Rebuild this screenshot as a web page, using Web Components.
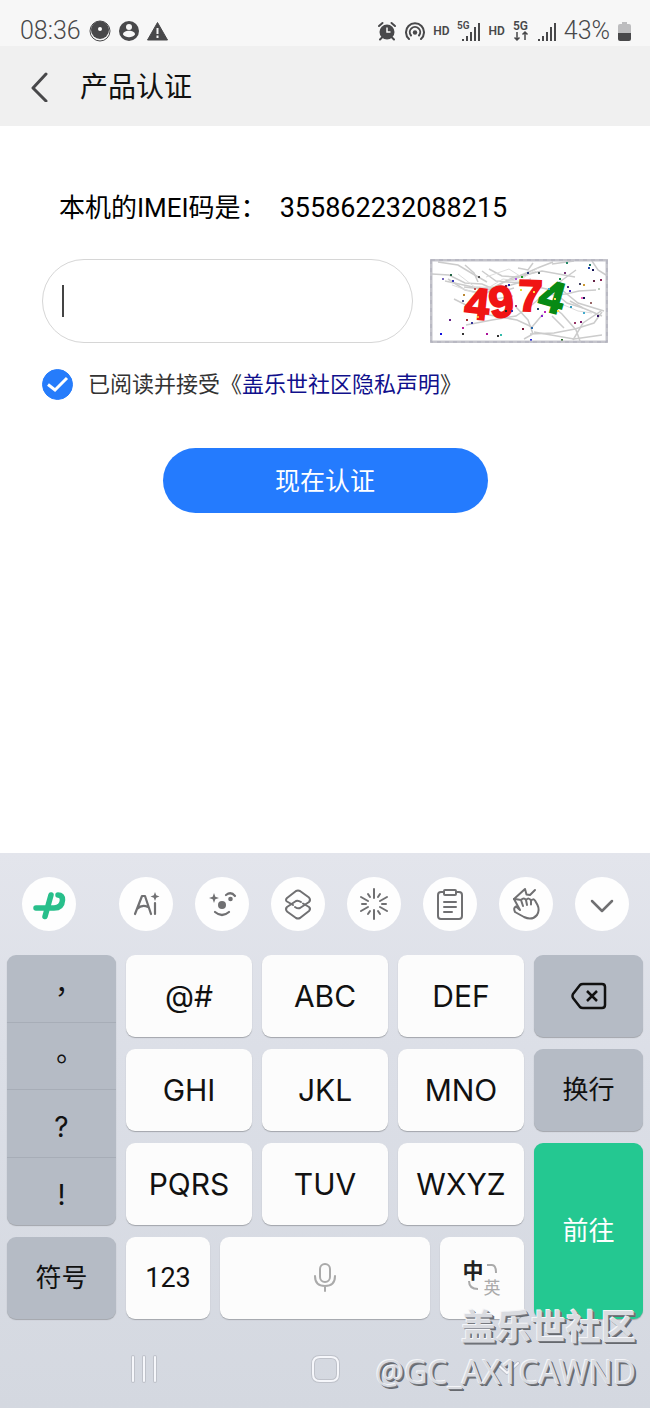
<!DOCTYPE html>
<html lang="zh-CN">
<head>
<meta charset="utf-8">
<meta name="viewport" content="width=device-width, initial-scale=1">
<title>产品认证</title>
<style>
  body {
    margin: 0;
    background: #fff;
    color: #111;
    font-family: Roboto, "Noto Sans CJK SC", sans-serif;
  }
</style>
</head>
<body>
<auth-app></auth-app>

<script>
class BaseElement extends HTMLElement {
  constructor() {
    super();
    this.attachShadow({ mode: 'open' });
  }

  connectedCallback() {
    this.render();
  }
}

class StatusBar extends BaseElement {
  render() {
    this.shadowRoot.innerHTML = `
      <style>
        :host {
          display: flex;
          justify-content: space-between;
          align-items: center;
          height: 30px;
          padding: 16px 19px 0 20px;
          background: #f7f7f7;
          color: #48484a;
          font-size: 25px;
          font-weight: 300;
          line-height: 30px;
        }
        div { display: flex; align-items: center; gap: 8px; }
        svg { display: block; fill: currentColor; }
        small { font-size: 12px; font-weight: 600; line-height: 30px; }
        svg text { font: 600 12px Roboto, sans-serif; }
        svg .tiny { font-size: 10px; }
      </style>
      <div>
        <span>08:36</span>
        <svg width="22" height="22" viewBox="0 0 22 22">
          <circle cx="11" cy="11" r="10" fill="none" stroke="currentColor" stroke-width="1"/>
          <circle cx="11" cy="10" r="9"/><circle cx="11" cy="9" r="2" fill="#fff"/>
        </svg>
        <svg width="20" height="20" viewBox="0 0 20 20">
          <circle cx="10" cy="10" r="10"/>
          <circle cx="10" cy="6" r="3" fill="#f7f7f7"/>
          <path d="M4 13.500C4 8.500 16 8.500 16 13.500C13.500 17 6.500 17 4 13.500Z" fill="#f7f7f7"/>
        </svg>
        <svg width="21" height="20" viewBox="0 0 21 20">
          <path d="M10.500 1.500L20.500 19H.5Z" stroke="currentColor" stroke-linejoin="round"/>
          <path d="M10.500 7v6M10.500 14.500v2.500" stroke="#f7f7f7" stroke-width="2"/>
        </svg>
      </div>
      <div>
        <svg width="20" height="20" viewBox="0 0 20 20">
          <circle cx="10" cy="11" r="7.500"/>
          <path d="M2 5L5.500 2M18 5L14.500 2M5 16.500L3 18.500M15 16.500L17 18.500" stroke="currentColor" stroke-width="2" stroke-linecap="round"/>
          <path d="M10 6.500V11h3.500" fill="none" stroke="#f7f7f7" stroke-width="1.500"/>
        </svg>
        <svg width="20" height="20" viewBox="0 0 20 20">
          <g fill="none" stroke="currentColor" stroke-width="2" stroke-linecap="round">
            <path d="M4 18A9 9 0 1 1 16 18"/><path d="M6 14.500A5.200 5.200 0 1 1 14 14.500"/>
          </g>
          <circle cx="10" cy="11.500" r="2.200"/>
        </svg>
        <small>HD</small>
        <svg width="23" height="22" viewBox="0 0 23 22">
          <text class="tiny" x="0" y="9">5G</text>
          <path d="M5 19h2v2H5zM9 16h2v5H9zM13 12h2v9h-2zM17 7h2v14h-2zM21 3h2v18h-2z"/>
        </svg>
        <small>HD</small>
        <svg width="16" height="22" viewBox="0 0 16 22">
          <text x="0" y="10">5G</text>
          <path d="M4 12v8M1.500 17.500L4 20l2.500-2.500M12 20v-8M9.500 14.500L12 12l2.500 2.500" fill="none" stroke="currentColor" stroke-width="1.500"/>
        </svg>
        <svg width="19" height="22" viewBox="0 0 19 22">
          <path d="M1 19h2v2H1zM5 16h2v5H5zM9 12h2v9H9zM13 7h2v14h-2zM17 3h2v18h-2z"/>
        </svg>
        <span>43%</span>
        <svg width="13" height="20" viewBox="0 0 13 20">
          <path d="M4 1h5v2h2q2 0 2 2v7H0V5q0-2 2-2h2z" fill="#bdbdbf"/>
          <path d="M0 12h13v6q0 2-2 2H2q-2 0-2-2z"/>
        </svg>
      </div>
    `;
  }
}

class PageHeader extends BaseElement {
  render() {
    this.shadowRoot.innerHTML = `
      <style>
        :host {
          display: flex;
          align-items: center;
          height: 80px;
          padding-left: 28px;
          background: #f0f0f0;
        }
        button {
          width: 52px;
          padding: 0;
          border: 0;
          background: none;
          color: #48484a;
          text-align: left;
        }
        svg { display: block; }
        h1 { margin: 0; padding-top: 4px; font-size: 28px; font-weight: 400; line-height: 40px; }
      </style>
      <button type="button" aria-label="返回">
        <svg width="24" height="32" viewBox="0 0 24 32" fill="none" stroke="currentColor" stroke-width="3" stroke-linecap="round">
          <path d="M18 4L5 18L18 31" stroke-linejoin="round"/>
        </svg>
      </button>
      <h1><slot></slot></h1>
    `;
  }
}

class CaptchaImage extends BaseElement {
  // [x, y, colour]
  static dots = [
    [136, 3, '#286'], [159, 5, '#276'], [158, 8, '#24a'], [20, 15, '#264'], [162, 10, '#115'],
    [97, 13, '#237'], [134, 13, '#737'], [85, 19, '#a5d'], [22, 21, '#33b'], [48, 17, '#555'],
    [163, 21, '#624'], [170, 20, '#825'], [153, 25, '#c93'], [149, 24, '#446'], [137, 27, '#538'],
    [129, 19, '#184'], [75, 26, '#824'], [33, 35, '#b83'], [32, 41, '#558'], [139, 31, '#42c'],
    [153, 38, '#115'], [160, 43, '#966'], [140, 47, '#39b'], [153, 53, '#4ac'], [114, 52, '#b2b'],
    [111, 56, '#82c'], [107, 49, '#246'], [167, 56, '#316'], [150, 62, '#716'], [176, 70, '#654'],
    [19, 60, '#628'], [32, 68, '#b29'], [41, 63, '#339'], [32, 74, '#333'], [10, 74, '#11d'],
    [56, 74, '#a19'], [67, 76, '#333'], [70, 75, '#3ba'], [92, 69, '#713'], [100, 80, '#22d'],
    [131, 80, '#262'], [101, 68, '#26a'], [36, 60, '#933'], [144, 63, '#936'], [12, 19, '#76b'],
    [91, 17, '#292'], [108, 13, '#455'], [78, 25, '#22a'], [44, 29, '#b55'], [168, 29, '#bcb'],
    [118, 29, '#3ac'], [103, 32, '#fd4'], [124, 39, '#fd5'], [75, 51, '#222'], [85, 46, '#a37'],
    [151, 38, '#e6b'], [90, 30, '#dd3'], [127, 51, '#fd4'], [47, 57, '#fa3'], [81, 51, '#33a']
  ];

  render() {
    const dots = CaptchaImage.dots
      .map(([x, y, fill]) => `<rect x="${x}" y="${y}" width="2" height="2" fill="${fill}"/>`)
      .join('');
    this.shadowRoot.innerHTML = `
      <style>
        :host { display: block; }
        button { display: block; padding: 0; border: 0; background: none; }
        svg { display: block; }
        text { font: 700 44px "Liberation Sans", sans-serif; stroke-width: 2px; }
      </style>
      <button type="button" aria-label="刷新验证码">
        <svg width="178" height="84" viewBox="0 0 178 84">
          <rect width="178" height="84" fill="#fff"/>
          <g fill="none" stroke="#ccc" stroke-width="1.500">
            <path d="M2 15L19 16L35 24L52 25L70 33L84 29"/>
            <path d="M8 3L28 6L43 15L57 23"/>
            <path d="M35 6L44 14L48 23M59 10L72 17L87 18L110 8L123 3"/>
            <path d="M15 22L43 28L62 29L84 18L112 12L145 18"/>
            <path d="M18 20L35 31L55 35L74 23L106 13"/>
            <path d="M24 40L54 55L87 61L102 68L113 55"/>
            <path d="M36 66L62 61L86 57L103 45L120 30L146 11"/>
            <path d="M86 48L98 61L103 75L94 80M100 75L124 74L145 70L164 64L172 53"/>
            <path d="M116 42L132 55L146 71L150 82M143 81L153 64L171 52"/>
            <path d="M132 31L148 44L174 52M140 42L153 49L172 57"/>
            <path d="M113 36L136 35L149 32L166 31"/>
            <path d="M88 9L98 11L103 4M122 5L144 2M162 2L168 11L176 16"/>
            <path d="M52 12L66 22L90 24L121 31L137 44L153 49"/>
            <path d="M122 57L134 69M34 28L62 31L81 26L101 20"/>
            <path d="M65 40L83 37M104 73L144 80L172 76"/>
          </g>
          <g fill="none" stroke="#ddd">
            <path d="M22 26L48 35L73 20L100 24M28 15L46 29L75 27"/>
            <path d="M56 18L79 10L93 19L108 9M129 44L148 52L162 54"/>
          </g>
          <g fill="#f01414" stroke="#f01414">
            <text x="35" y="60" transform="rotate(6 48 45)">4</text>
            <text x="59" y="58" transform="rotate(-8 71 43)">9</text>
            <text x="88" y="52" transform="rotate(2 100 36)">7</text>
          </g>
          <text x="110" y="53" transform="rotate(16 122 38)" fill="#078a14" stroke="#078a14">4</text>
          ${dots}
          <rect x="1" y="1" width="176" height="82" fill="none" stroke="#c4c4cb" stroke-width="3"/>
          <rect x="1" y="1" width="176" height="82" fill="none" stroke="#adadba" stroke-dasharray="4 4"/>
        </svg>
      </button>
    `;
  }
}

class AgreeCheck extends BaseElement {
  render() {
    this.shadowRoot.innerHTML = `
      <style>
        :host {
          display: flex;
          align-items: center;
          gap: 15px;
          color: #333;
          font-size: 22px;
          line-height: 32px;
        }
        .box { display: grid; width: 31px; height: 31px; }
        .box > * { grid-area: 1 / 1; }
        input {
          appearance: none;
          width: 31px;
          height: 31px;
          margin: 0;
          border: 1px solid #267cfb;
          border-radius: 50%;
        }
        input:checked { background: #267cfb; }
        svg { pointer-events: none; }
        .text { padding-top: 2px; }
        a { color: #10108c; text-decoration: none; }
      </style>
      <span class="box">
        <input type="checkbox" id="agree" checked>
        <svg width="31" height="31" viewBox="0 0 31 31" fill="none" stroke="#fff" stroke-width="3">
          <path d="M6 15.500L13 21L25 9"/>
        </svg>
      </span>
      <span class="text"><label for="agree">已阅读并接受</label>《<a href="#privacy">盖乐世社区隐私声明</a>》</span>
    `;
  }
}

class AuthForm extends BaseElement {
  render() {
    this.shadowRoot.innerHTML = `
      <style>
        :host { display: block; padding: 63px 42px; }
        form { display: flex; flex-direction: column; }
        p {
          display: flex;
          align-items: baseline;
          gap: 13px;
          margin: 0 0 32px 17px;
          color: #000;
          font-size: 26px;
          line-height: 38px;
        }
        output { font-size: 27px; }
        .row { display: flex; gap: 17px; margin-bottom: 24px; }
        .field {
          display: flex;
          flex: 1;
          align-items: center;
          box-sizing: border-box;
          min-width: 0;
          height: 84px;
          padding: 0 19px;
          border: 1px solid #d6d6d6;
          border-radius: 42px;
        }
        .caret { width: 2px; height: 32px; background: #444; }
        input {
          flex: 1;
          min-width: 0;
          height: 60px;
          border: 0;
          outline: 0;
          background: none;
          caret-color: transparent;
          font: inherit;
          font-size: 26px;
        }
        .submit {
          align-self: center;
          width: 325px;
          max-width: 100%;
          height: 65px;
          margin-top: 47px;
          padding: 0 0 4px;
          border: 0;
          border-radius: 33px;
          background: #247bfe;
          color: #fff;
          font: inherit;
          font-size: 25px;
        }
      </style>
      <form>
        <p><span>本机的IMEI码是：</span><output>355862232088215</output></p>
        <div class="row">
          <div class="field">
            <span class="caret"></span>
            <input type="text" aria-label="验证码">
          </div>
          <captcha-image></captcha-image>
        </div>
        <agree-check></agree-check>
        <button class="submit" type="button">现在认证</button>
      </form>
    `;
  }
}

class ToolButton extends BaseElement {
  static icons = {
    logo: `<g fill="none" stroke="#28bf8b" stroke-width="5.500" stroke-linecap="round" stroke-linejoin="round">
        <path d="M29 18L23 39.500M14 31H32Q40 31 40.500 23Q40.500 18 36 18"/></g>`,
    ai: `<path d="M16 37L23 19H26L32 37M18 32Q23 27 29 30M36 26V37" stroke-width="2.200"/>
        <path d="M36 15L37.200 18.300L40.500 19.500L37.200 20.700L36 24L34.800 20.700L31.500 19.500L34.800 18.300Z" fill="currentColor" stroke="none"/>`,
    face: `<path d="M19 16L20.300 19.700L24 21L20.300 22.300L19 26L17.700 22.300L14 21L17.700 19.700Z" fill="currentColor" stroke="none"/>
        <circle cx="27" cy="28" r="4" fill="currentColor" stroke="none"/>
        <circle cx="35.500" cy="22" r="2.300" fill="currentColor" stroke="none"/>
        <path d="M31 18Q36 14 40 19M20 35Q27 41 34 35" stroke-width="2.200"/>`,
    layers: `<path d="M22 28L16 24.500Q14 23 16 21L25 14Q27 13 29 14L38 20.500Q40 23 38 25L29 31Q27 32 24 30"/>
        <path d="M32 26.500L38 30Q40 32 38 34L29 41Q27 42 25 41L16 34.500Q14 32 16 30L25 24Q27 23 30 25"/>`,
    burst: `<path d="M27 12V21M27 33V42M15 27H19M35 27H39M14 20L21 24M40 20L33 24M14 34L21 30M40 34L33 30M21 17L23 20M33 17L31 20M21 37L23 34M33 37L31 34"/>`,
    clip: `<rect x="15" y="15" width="24" height="27" rx="3"/>
        <rect x="21" y="13" width="12" height="5" rx="1" fill="#fff"/>
        <path d="M21 25H33M21 30H33M21 35H29"/>`,
    hand: `<path d="M15 22L26 12L27.500 17.500L31 18L36 13"/>
        <path d="M15 22L21 33L17 29.500Q14 31 16 35L25 40Q33 44 38 38Q41 33 38.500 28L36 23.500Q34 21 32 24V27.500M32 23.500Q30 20 27 23L28 28M27 23Q25 20 22 23L24 29M22 23L16 22"/>`,
    down: `<path d="M17 24L27 34L37 24" stroke-width="2.500"/>`
  };

  render() {
    this.shadowRoot.innerHTML = `
      <style>
        :host { display: block; }
        button {
          display: block;
          width: 54px;
          height: 54px;
          padding: 0;
          border: 0;
          border-radius: 50%;
          background: #fefefe;
          color: #707072;
        }
        svg { display: block; }
      </style>
      <button type="button" aria-label="${this.getAttribute('label')}">
        <svg width="54" height="54" viewBox="0 0 54 54" fill="none" stroke="currentColor" stroke-width="2" stroke-linecap="round" stroke-linejoin="round">
          ${ToolButton.icons[this.getAttribute('icon')]}
        </svg>
      </button>
    `;
  }
}

class KeyCap extends BaseElement {
  render() {
    this.shadowRoot.innerHTML = `
      <style>
        :host { display: grid; }
        button {
          min-width: 0;
          padding: 0;
          border: 0;
          border-radius: 9px;
          background: #fcfcfc;
          box-shadow: 0 1px 1px #a2a5ab;
          color: #111;
          font-family: Inter, "Noto Sans CJK SC", sans-serif;
          font-size: 30px;
          line-height: 40px;
        }
        :host([tone="gray"]) button { background: #b5bbc5; font-size: 26px; }
        :host([tone="number"]) button { font-family: Roboto, sans-serif; font-size: 27px; }
        :host([tone="go"]) button { background: #24c891; color: #fff; font-size: 26px; }
        ::slotted(svg) { display: block; margin: 0 auto; }
      </style>
      <button type="button"><slot></slot></button>
    `;
  }
}

class PunctuationColumn extends BaseElement {
  render() {
    this.shadowRoot.innerHTML = `
      <style>
        :host {
          display: grid;
          grid-template-rows: repeat(4, 1fr);
          overflow: hidden;
          border-radius: 9px;
          background: #b5bbc5;
          box-shadow: 0 1px 1px #a2a5ab;
        }
        button {
          padding: 8px 0 0;
          border: 0;
          border-bottom: 1px solid #a7adb7;
          background: none;
          color: #111;
          font-family: Inter, "Noto Sans CJK TC", sans-serif;
          font-size: 28px;
          line-height: 40px;
        }
        button:last-child { border-bottom: 0; }
      </style>
      ${['，', '。', '?', '!'].map(mark => `<button type="button" lang="zh-TW">${mark}</button>`).join('')}
    `;
  }
}

class LanguageMark extends BaseElement {
  render() {
    this.shadowRoot.innerHTML = `
      <style>
        :host {
          display: grid;
          grid-template-columns: 20px 18px;
          grid-template-rows: 18px 18px;
          place-content: center;
          place-items: center;
          color: #aaa;
          font-family: "Noto Sans CJK SC", sans-serif;
          font-size: 17px;
          line-height: 18px;
        }
        b { color: #222; font-size: 21px; font-weight: 700; }
        svg { display: block; fill: none; stroke: currentColor; stroke-width: 2; }
      </style>
      <b>中</b>
      <svg width="14" height="14" viewBox="0 0 14 14"><path d="M2 3H7Q11 3 11 11"/></svg>
      <svg width="14" height="14" viewBox="0 0 14 14"><path d="M3 1Q3 9 12 9"/></svg>
      <span>英</span>
    `;
  }
}

class NavBar extends BaseElement {
  render() {
    this.shadowRoot.innerHTML = `
      <style>
        :host {
          display: grid;
          grid-template-columns: repeat(3, 1fr);
          padding: 34px 52px 23px;
        }
        button { justify-self: center; padding: 0; border: 0; background: none; }
        svg {
          display: block;
          fill: none;
          stroke-linecap: round;
          stroke-linejoin: round;
        }
        .edge { stroke: #bfc2ca; stroke-width: 4; }
        .line { stroke: #f6f7fb; stroke-width: 2; }
      </style>
      ${[
        ['最近任务', 'M7 4V28M18 4V28M29 4V28'],
        ['主屏幕', 'M12 4H23Q30 4 30 11V21Q30 28 23 28H12Q5 28 5 21V11Q5 4 12 4Z'],
        ['收起键盘', 'M6 10L17 20L28 10']
      ].map(([label, d]) => `
        <button type="button" aria-label="${label}">
          <svg width="34" height="32" viewBox="0 0 34 32"><path class="edge" d="${d}"/><path class="line" d="${d}"/></svg>
        </button>
      `).join('')}
    `;
  }
}

class WaterMark extends BaseElement {
  render() {
    this.shadowRoot.innerHTML = `
      <style>
        :host {
          display: block;
          color: #d9dbe0;
          font-family: "Open Sans", "Noto Sans CJK SC", sans-serif;
          font-size: 32px;
          line-height: 45px;
          text-align: right;
          text-shadow: -1px -1px 0 #f4f5f8, 1px 1px 0 #777a80, 2px 2px 0 #66696e;
          pointer-events: none;
        }
        b, span { display: block; }
        b { font-size: 35px; }
      </style>
      <b>盖乐世社区</b>
      <span>@GC_AX1CAWND</span>
    `;
  }
}

class KeyBoard extends BaseElement {
  render() {
    this.shadowRoot.innerHTML = `
      <style>
        :host {
          display: block;
          position: relative;
          background: linear-gradient(#e3e5ec, #dcdfe7 35%, #d4d8e0);
        }
        .tools { display: flex; gap: 22px; padding: 24px 21px 24px 22px; }
        .tools tool-button:first-child { margin-right: auto; }
        .keys {
          display: grid;
          grid-template-columns: 109fr 126fr 126fr 126fr 109fr;
          grid-template-rows: repeat(4, 82px);
          gap: 12px 10px;
          padding: 0 7px;
        }
        punctuation-column { grid-area: 1 / 1 / 4 / 2; }
        .go { grid-area: 3 / 5 / 5 / 6; }
        .bottom {
          display: grid;
          grid-area: 4 / 2 / 5 / 5;
          grid-template-columns: 2fr 5fr 2fr;
          gap: 10px;
        }
        water-mark { position: absolute; right: 14px; bottom: 14px; }
      </style>
      <div class="tools">
        <tool-button icon="logo" label="输入法"></tool-button>
        <tool-button icon="ai" label="智能助手"></tool-button>
        <tool-button icon="face" label="表情"></tool-button>
        <tool-button icon="layers" label="快捷短语"></tool-button>
        <tool-button icon="burst" label="特效"></tool-button>
        <tool-button icon="clip" label="剪贴板"></tool-button>
        <tool-button icon="hand" label="手写"></tool-button>
        <tool-button icon="down" label="收起"></tool-button>
      </div>
      <div class="keys">
        <punctuation-column></punctuation-column>
        <key-cap>@#</key-cap>
        <key-cap>ABC</key-cap>
        <key-cap>DEF</key-cap>
        <key-cap tone="gray">
          <svg width="36" height="28" viewBox="0 0 36 28" fill="none" stroke="#111" stroke-width="2.500" stroke-linejoin="round">
            <path d="M12 2H31Q34 2 34 5V23Q34 26 31 26H12Q10 26 9 25L2 16Q1 14 2 12L9 3Q10 2 12 2ZM16 9L26 19M26 9L16 19"/>
          </svg>
        </key-cap>
        <key-cap>GHI</key-cap>
        <key-cap>JKL</key-cap>
        <key-cap>MNO</key-cap>
        <key-cap tone="gray">换行</key-cap>
        <key-cap>PQRS</key-cap>
        <key-cap>TUV</key-cap>
        <key-cap>WXYZ</key-cap>
        <key-cap class="go" tone="go">前往</key-cap>
        <key-cap tone="gray">符号</key-cap>
        <div class="bottom">
          <key-cap tone="number">123</key-cap>
          <key-cap>
            <svg width="24" height="30" viewBox="0 0 24 30" fill="none" stroke="#aaa" stroke-width="2" stroke-linecap="round">
              <rect x="7" y="1" width="10" height="18" rx="5"/>
              <path d="M2 13Q2 23 12 23Q22 23 22 13M12 23V28"/>
            </svg>
          </key-cap>
          <key-cap><language-mark></language-mark></key-cap>
        </div>
      </div>
      <nav-bar></nav-bar>
      <water-mark></water-mark>
    `;
  }
}

class AuthApp extends BaseElement {
  render() {
    this.shadowRoot.innerHTML = `
      <style>
        :host { display: flex; flex-direction: column; min-height: 100vh; }
        auth-form { flex: 1; }
      </style>
      <status-bar></status-bar>
      <page-header>产品认证</page-header>
      <auth-form></auth-form>
      <key-board></key-board>
    `;
  }
}

customElements.define('status-bar', StatusBar);
customElements.define('page-header', PageHeader);
customElements.define('captcha-image', CaptchaImage);
customElements.define('agree-check', AgreeCheck);
customElements.define('auth-form', AuthForm);
customElements.define('tool-button', ToolButton);
customElements.define('key-cap', KeyCap);
customElements.define('punctuation-column', PunctuationColumn);
customElements.define('language-mark', LanguageMark);
customElements.define('nav-bar', NavBar);
customElements.define('water-mark', WaterMark);
customElements.define('key-board', KeyBoard);
customElements.define('auth-app', AuthApp);
</script>
</body>
</html>
